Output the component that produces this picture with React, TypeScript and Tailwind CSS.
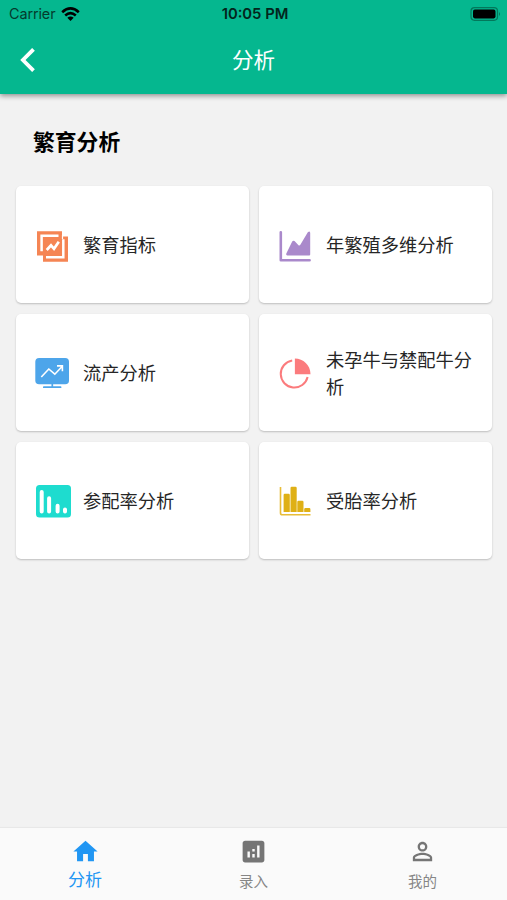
import React from "react";
import { MdAnalytics, MdHome, MdPersonOutline } from "react-icons/md";

function CompareIcon() {
  return (
    <svg width="36" height="36" viewBox="0 0 36 36" fill="none">
      <path d="M3 4.200h25v24.300H3zM9 9.500h25v25.200H9z" fill="#f58554" />
      <path d="M7.600 24.300V8.800H24.500" stroke="#fff" strokeWidth="2.500" />
      <path d="M12 30.300h17.300V12.200" stroke="#fff" strokeWidth="2.500" />
      <path d="M28.500 8v4" stroke="#fff" strokeWidth="1.200" />
      <path d="M12.700 23l4.300-4.700 3 3.500 4.800-7" stroke="#fff" strokeWidth="2.700" />
    </svg>
  );
}

function AreaIcon() {
  return (
    <svg width="36" height="36" viewBox="-2 -2.5 36 36" fill="none">
      <path d="M1.800 2.800v28h28.800" stroke="#aa89cb" strokeWidth="2.600" strokeLinecap="round" strokeLinejoin="round" />
      <path
        d="M7.300 24L13.200 12q1-1.500 2.300-.400l4 4.200q1.200.600 2-.800L28.800 2.800q2.400-1.800 2.400.800V25q0 .900-1 .900H8.300q-1.700-.200-1-1.900z"
        fill="#aa89cb"
      />
    </svg>
  );
}

function MonitorIcon() {
  return (
    <svg width="36" height="36" viewBox="0 -2 36 36" fill="none">
      <rect x="1.300" y="1" width="33.700" height="26.200" rx="3.800" fill="#4da5ea" />
      <path d="M18.300 27v3M9.800 30.200h16.800" stroke="#4da5ea" strokeWidth="1.700" strokeLinecap="round" />
      <path d="M7.300 20l7.500-8 6 5.200 7.500-8M23 8.900h5.400v5.400" stroke="#fff" strokeWidth="1.600" />
    </svg>
  );
}

function PieIcon() {
  return (
    <svg width="36" height="36" viewBox="-2 -2 36 36" fill="none">
      <path d="M13.200 3.500A13.600 13.600 0 1 0 28.600 20" stroke="#fb7b7d" strokeWidth="2" />
      <path d="M15.900 1.500C24.200 1.500 31.400 8 31.500 17.200H15.900Z" fill="#fb7b7d" />
    </svg>
  );
}

function DeclineIcon() {
  return (
    <svg width="37" height="36" viewBox="-1 -.5 37 36" fill="none">
      <rect x="1" y="1.500" width="35" height="32.500" rx="3.500" fill="#1edccf" />
      <path d="M6.700 8.500v19.500M14.100 14.700v13.300M22.600 22.300v5.700M30 26v2" stroke="#fff" strokeWidth="4" strokeLinecap="round" />
    </svg>
  );
}

function BarsIcon() {
  return (
    <svg width="36" height="36" viewBox="-2 -1 36 36" fill="none">
      <path d="M1.500 3v26q0 1.800 1.800 1.800H31.500" stroke="#e8bd38" strokeWidth="1.600" />
      <path
        d="M4.600 28V11q0-1.200 1.200-1.200h3.800q1.200 0 1.200 1.200v17zM11.500 28V4q0-1.200 1.200-1.200h3.800q1.200 0 1.200 1.200v24zM18.300 28V18q0-1.200 1.200-1.200h3.800q1.200 0 1.200 1.200v10zM25.200 28v-2.700q0-1.200 1.200-1.200h3.800q1.200 0 1.200 1.200v2.700z"
        fill="#dfb016"
      />
    </svg>
  );
}

const items = [
  { label: "繁育指标", icon: <CompareIcon /> },
  { label: "年繁殖多维分析", icon: <AreaIcon /> },
  { label: "流产分析", icon: <MonitorIcon /> },
  { label: "未孕牛与禁配牛分析", icon: <PieIcon /> },
  { label: "参配率分析", icon: <DeclineIcon /> },
  { label: "受胎率分析", icon: <BarsIcon /> },
];

function StatusBar() {
  return (
    <div className="grid h-7 grid-cols-3 items-center pr-[6px] pl-[9px] font-['Inter','Liberation_Sans',sans-serif] text-[14.4px] leading-none text-[#043b2d]">
      <div className="flex items-center gap-[6px]">
        <span className="tracking-[-0.1px]">Carrier</span>
        <svg className="mb-px" width="19" height="14" viewBox="0 0 19 14" fill="none" stroke="#000" strokeWidth="2.600">
          <path d="M1.200 5.200Q9.500-2.400 17.800 5.200M4.200 8.400q5.300-4.600 10.600 0" />
          <path d="M6.300 10.800q3.200-2.600 6.400 0L9.500 14z" fill="#000" stroke="none" />
        </svg>
      </div>
      <span className="text-center text-[14.800px] font-semibold whitespace-nowrap text-[#03251c]">10:05 PM</span>
      <svg className="mb-px justify-self-end" width="31" height="14" viewBox="0 0 31 14">
        <rect x="1" y=".7" width="26.500" height="12.600" rx="3.500" fill="none" stroke="#03785b" strokeWidth="1.200" />
        <rect x="3" y="2.600" width="22.500" height="8.800" rx="1.800" fill="#000" />
        <path d="M29 5q2 2 0 4z" fill="#03785b" />
      </svg>
    </div>
  );
}

export default function App() {
  return (
    <div className="flex h-[900px] w-full flex-col bg-[#f2f2f2] font-['Noto_Sans_CJK_SC',sans-serif]">
      <header className="h-[94px] shrink-0 bg-[#05b78f] shadow-[0_2px_5px_rgba(0,0,0,0.4)]">
        <StatusBar />
        <div className="grid h-16 grid-cols-3 items-center px-5">
          <button type="button" aria-label="返回" className="justify-self-start">
            <svg width="16" height="24" viewBox="0 0 16 24" fill="none" stroke="#fff" strokeWidth="3.800">
              <path d="M13.500 1.300L2.900 12l10.600 10.700" />
            </svg>
          </button>
          <h1 className="-mt-[2px] text-center text-[21.500px] leading-8 text-white">分析</h1>
        </div>
      </header>

      <main className="flex-1 pr-[15px] pl-4">
        <h2 className="pt-[31px] pl-[17px] text-[21.800px] leading-8 font-bold text-black">繁育分析</h2>
        <div className="mt-[29px] grid grid-cols-2 gap-x-[10px] gap-y-[11px]">
          {items.map((item) => (
            <div
              key={item.label}
              className="flex h-[117px] items-center gap-[13px] rounded-[5px] bg-white pr-[16px] pl-[18px] shadow-[0_1px_2px_rgba(0,0,0,0.22)]"
            >
              <div className="w-9 shrink-0">{item.icon}</div>
              <span className="text-[18.250px] leading-[27px] text-[#262626]">{item.label}</span>
            </div>
          ))}
        </div>
      </main>

      <nav className="grid h-[72px] shrink-0 grid-cols-3 bg-[#fafafa] shadow-[0_-1px_1px_rgba(0,0,0,0.04)]">
        <div className="flex flex-col items-center pt-[9px] pl-px text-[#2196f3]">
          <MdHome size={29} />
          <span className="mt-px text-[17px] leading-6">分析</span>
        </div>
        <div className="flex flex-col items-center pt-[9px] text-[#757575]">
          <MdAnalytics size={29} />
          <span className="mt-[3px] text-[14.500px] leading-6 text-[#868686]">录入</span>
        </div>
        <div className="flex flex-col items-center pt-[9px] text-[#757575]">
          <MdPersonOutline size={29} />
          <span className="mt-[3px] text-[14.500px] leading-6 text-[#868686]">我的</span>
        </div>
      </nav>
    </div>
  );
}
